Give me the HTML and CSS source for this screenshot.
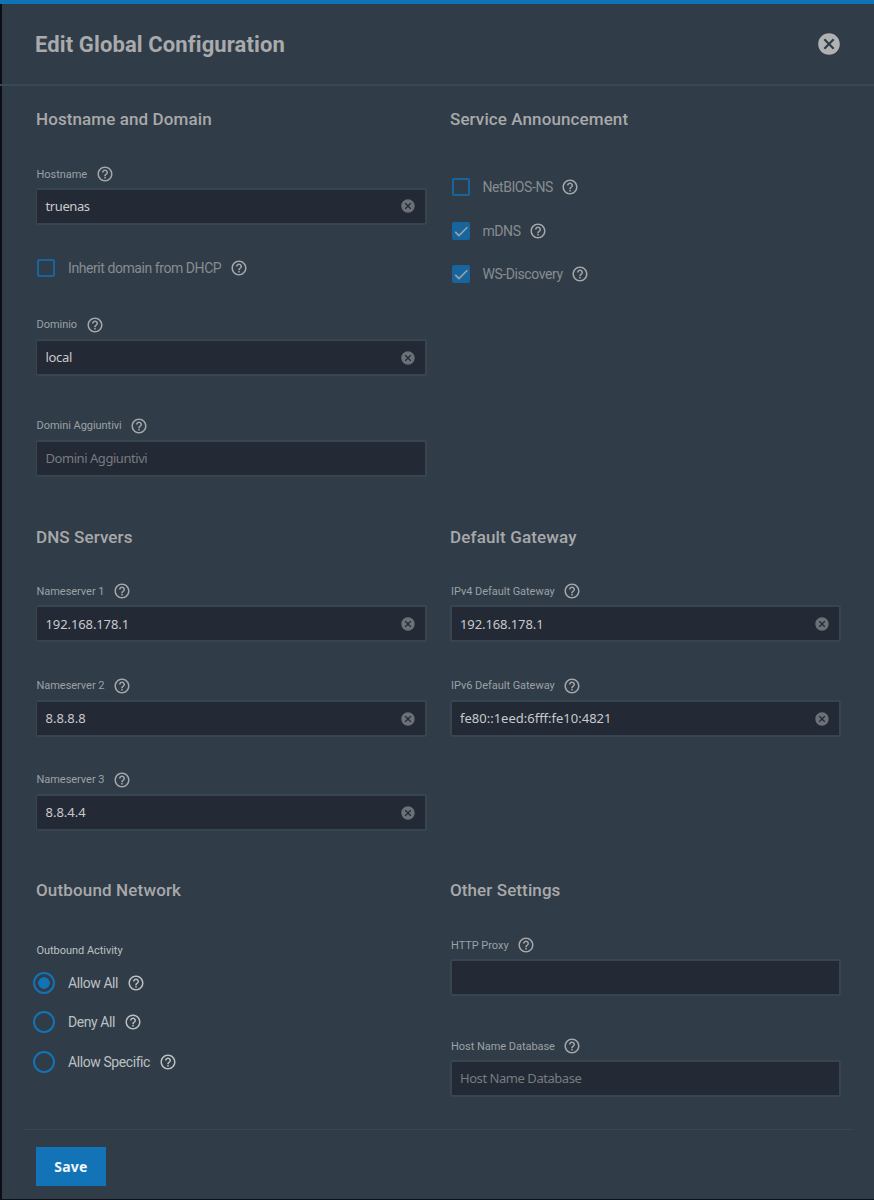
FILE: index.html
```html
<!DOCTYPE html>
<html lang="en">
<head>
<meta charset="utf-8">
<title>Edit Global Configuration</title>
<link rel="stylesheet" href="styles.css">
</head>
<body>
<svg class="defs" width="0" height="0">
  <symbol id="help" viewBox="0 0 24 24"><path d="M11 18h2v-2h-2v2zm1-16C6.48 2 2 6.48 2 12s4.480 10 10 10 10-4.480 10-10S17.520 2 12 2zm0 18c-4.410 0-8-3.590-8-8s3.590-8 8-8 8 3.590 8 8-3.590 8-8 8zm0-14c-2.210 0-4 1.790-4 4h2c0-1.100.9-2 2-2s2 .9 2 2c0 2-3 1.750-3 5h2c0-2.250 3-2.500 3-5 0-2.210-1.790-4-4-4z"/></symbol>
  <symbol id="close" viewBox="0 0 24 24"><path d="M12 2C6.470 2 2 6.470 2 12s4.470 10 10 10 10-4.470 10-10S17.530 2 12 2zm5 13.590L15.590 17 12 13.410 8.410 17 7 15.590 10.590 12 7 8.410 8.410 7 12 10.590 15.590 7 17 8.410 13.410 12 17 15.590z"/></symbol>
  <symbol id="check" viewBox="0 0 24 24"><path d="M4.300 13.200 9.300 18.200 20.500 7" fill="none" stroke="#99a2a8" stroke-width="2.200"/></symbol>
</svg>
<div class="panel">
  <header class="header">
    <h1 class="title">Edit Global Configuration</h1>
    <svg class="close"><use href="#close"/></svg>
  </header>
  <main class="content">
    <section class="section left general">
      <h2 class="heading h-host">Hostname and Domain</h2>
      <div class="field"><div class="label">Hostname<svg class="help"><use href="#help"/></svg></div><div class="input"><span class="v-true">truenas</span><svg class="clear"><use href="#close"/></svg></div></div>
      <div class="option inherit"><i class="box"></i><span>Inherit domain from DHCP</span><svg class="help"><use href="#help"/></svg></div>
      <div class="field domain"><div class="label">Dominio<svg class="help"><use href="#help"/></svg></div><div class="input"><span class="v-local">local</span><svg class="clear"><use href="#close"/></svg></div></div>
      <div class="field extra"><div class="label">Domini Aggiuntivi<svg class="help"><use href="#help"/></svg></div><div class="input"><span class="placeholder">Domini Aggiuntivi</span></div></div>
    </section>
    <section class="section general">
      <h2 class="heading h-service">Service Announcement</h2>
      <div class="services">
        <div class="option"><i class="box"></i><span>NetBIOS-NS</span><svg class="help"><use href="#help"/></svg></div>
        <div class="option"><i class="box checked"><svg><use href="#check"/></svg></i><span>mDNS</span><svg class="help"><use href="#help"/></svg></div>
        <div class="option"><i class="box checked"><svg><use href="#check"/></svg></i><span>WS-Discovery</span><svg class="help"><use href="#help"/></svg></div>
      </div>
    </section>
    <section class="section left dns">
      <h2 class="heading h-dns">DNS Servers</h2>
      <div class="field"><div class="label">Nameserver 1<svg class="help"><use href="#help"/></svg></div><div class="input"><span class="v-ipv4">192.168.178.1</span><svg class="clear"><use href="#close"/></svg></div></div>
      <div class="field"><div class="label">Nameserver 2<svg class="help"><use href="#help"/></svg></div><div class="input"><span>8.8.8.8</span><svg class="clear"><use href="#close"/></svg></div></div>
      <div class="field"><div class="label">Nameserver 3<svg class="help"><use href="#help"/></svg></div><div class="input"><span>8.8.4.4</span><svg class="clear"><use href="#close"/></svg></div></div>
    </section>
    <section class="section dns">
      <h2 class="heading h-gateway">Default Gateway</h2>
      <div class="field"><div class="label">IPv4 Default Gateway<svg class="help"><use href="#help"/></svg></div><div class="input"><span class="v-ipv4">192.168.178.1</span><svg class="clear"><use href="#close"/></svg></div></div>
      <div class="field"><div class="label">IPv6 Default Gateway<svg class="help"><use href="#help"/></svg></div><div class="input"><span class="v-ipv6">fe80::1eed:6fff:fe10:4821</span><svg class="clear"><use href="#close"/></svg></div></div>
    </section>
    <section class="section left other">
      <h2 class="heading h-outbound">Outbound Network</h2>
      <div class="group-label">Outbound Activity</div>
      <div class="radio"><i class="dot selected"></i><span>Allow All</span><svg class="help"><use href="#help"/></svg></div>
      <div class="radio"><i class="dot"></i><span>Deny All</span><svg class="help"><use href="#help"/></svg></div>
      <div class="radio"><i class="dot"></i><span>Allow Specific</span><svg class="help"><use href="#help"/></svg></div>
    </section>
    <section class="section other">
      <h2 class="heading h-other">Other Settings</h2>
      <div class="field"><div class="label">HTTP Proxy<svg class="help"><use href="#help"/></svg></div><div class="input"></div></div>
      <div class="field hosts"><div class="label">Host Name Database<svg class="help"><use href="#help"/></svg></div><div class="input"><span class="placeholder">Host Name Database</span></div></div>
    </section>
  </main>
  <footer class="footer"><button class="save">Save</button></footer>
</div>
</body>
</html>
```
FILE: styles.css
```css
* { box-sizing: border-box; }
body { margin: 0; height: 1200px; overflow: hidden; background: #0d1116; font-family: Roboto, sans-serif; color: #9ca1a5; }
.defs { position: absolute; }
svg { fill: currentColor; flex: none; }
.panel { height: 1199px; border-left: 2px solid #0b0f15; background: #303c48; display: flex; flex-direction: column; }
.header { width: calc(100% + 2px); margin-left: -2px; height: 86px; flex: none; border-top: 4px solid #0f73b8; border-bottom: 2px solid #394854; padding: 0 33px 0 35px; display: flex; justify-content: space-between; align-items: center; background: linear-gradient(90deg, #0b0f15 2px, #303c48 2px); }
.title { margin: 2px 0 0; font: 700 22px/30px Roboto, sans-serif; letter-spacing: 0.110px; color: #a9aaab; }
.close { width: 26px; height: 26px; margin-right: -1px; color: #b0b1b2; }
.content { padding: 0 33px 0 34px; display: grid; grid-template-columns: 391px 391px; column-gap: 23px; grid-template-rows: 418px 353px 272px; }
.heading { margin: 0; padding-top: 21px; height: 77px; font: 500 17px/24px Roboto, sans-serif; letter-spacing: 0.100px; color: #a8a9aa; }
.h-gateway, .h-outbound { letter-spacing: 0.150px; }
.label { height: 22px; display: flex; align-items: center; font-size: 11px; letter-spacing: -0.040px; padding-left: 1px; }
.left .label { padding-left: 0.500px; }
.help { width: 18px; height: 18px; margin-left: 8.500px; color: #a5a7a9; }
.input { margin-top: 3px; height: 37px; border: 2px solid #364550; border-radius: 2px; background: #232935; padding: 0 9px 2px 8px; display: flex; align-items: center; justify-content: space-between; font: 13px/18px "Noto Sans", sans-serif; color: #c8cacc; }
.left .input { border-left-width: 1px; padding-left: 8.500px; }
.dns .input, .extra .input, .domain .input { padding-bottom: 0; }
.clear { width: 16px; height: 16px; margin-top: 1px; color: #6c7178; }
.placeholder { color: #777c81; letter-spacing: -0.450px; }
.v-true { letter-spacing: -0.400px; }
.v-local { letter-spacing: -0.300px; }
.v-ipv4 { letter-spacing: -0.100px; }
.option { display: flex; align-items: center; height: 20px; font-size: 14px; letter-spacing: -0.430px; color: #878c90; }
.option span { margin-left: 13px; }
.box { width: 18px; height: 18px; border: 2px solid #17659c; border-radius: 2px; margin-left: 1px; }
.checked { background: #17659c; border: 0; }
.checked svg { display: block; width: 18px; height: 18px; }
.inherit { margin-top: 33px; }
.domain { margin-top: 35.500px; }
.extra { margin-top: 39px; }
.services { padding: 14px 0 0 0.500px; display: flex; flex-direction: column; gap: 23.600px; }
.dns .heading { height: 76.400px; }
.dns .field { height: 94.200px; }
.group-label { height: 29.500px; padding: 10px 0 0 0.500px; font-size: 11px; line-height: 14px; color: #bcc0c2; letter-spacing: -0.040px; }
.radio { height: 39.300px; display: flex; align-items: center; margin-left: -3px; font-size: 14px; letter-spacing: -0.420px; color: #bcc0c2; }
.radio span { margin-left: 13px; }
.radio .help { color: #bcc0c2; margin-left: 9px; }
.dot { width: 22px; height: 22px; border: 2px solid #1274b6; border-radius: 50%; }
.selected { background: radial-gradient(circle, #1274b6 5.500px, transparent 6px); }
.hosts { margin-top: 39px; }
.footer { margin: 0 21px 0 22px; border-top: 1px solid #374650; padding: 17px 12px; height: 70px; }
.save { width: 70px; height: 39px; padding: 0; border: 0; background: #1274b6; color: #f3f7fa; font: 700 14px/20px "Noto Sans", sans-serif; letter-spacing: 0.200px; }
```
